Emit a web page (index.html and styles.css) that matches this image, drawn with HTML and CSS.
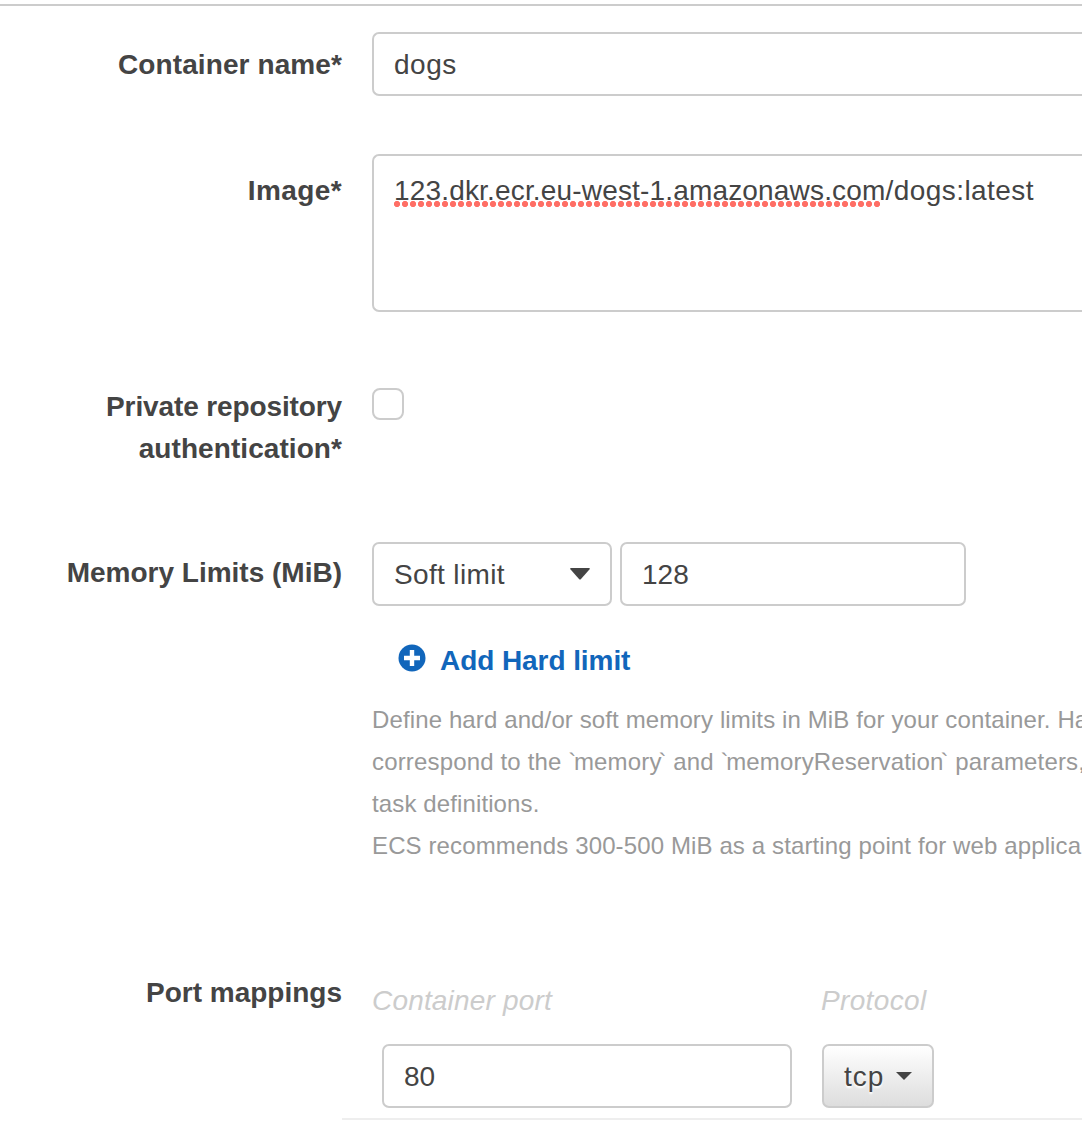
FILE: index.html
```html
<!DOCTYPE html>
<html lang="en">
<head>
<meta charset="utf-8">
<title>Container definition</title>
<link rel="stylesheet" href="styles.css">
</head>
<body>
<form class="container-form">
  <div class="row row-name">
    <div class="label label-name">Container name*</div>
    <div class="field"><div class="input input-wide">dogs</div></div>
  </div>
  <div class="row row-image">
    <div class="label label-image">Image*</div>
    <div class="field"><div class="textarea"><span class="misspelled">123.dkr.ecr.eu-west-1.amazonaws.com</span><span class="path">/dogs:latest</span></div></div>
  </div>
  <div class="row row-auth">
    <div class="label label-auth"><span class="auth-first">Private repository</span><br>authentication*</div>
    <div class="field"><div class="checkbox"></div></div>
  </div>
  <div class="row row-memory">
    <div class="label label-memory">Memory Limits (MiB)</div>
    <div class="field">
      <div class="limit">
        <div class="input select"><span class="soft">Soft limit</span><svg width="20" height="12" viewBox="0 0 20 12"><path d="M1 0H19Q20.6 0 19.4 1.4L11 11Q10 12 9 11L.6 1.4Q-.6 0 1 0Z" fill="#444"/></svg></div>
        <div class="input input-limit">128</div>
      </div>
      <a class="add"><svg width="28" height="28" viewBox="0 0 28 28"><circle cx="14" cy="14" r="13.5" fill="#1166bb"/><path d="M14 6v16M6 14h16" stroke="#fff" stroke-width="4.4"/></svg><span>Add Hard limit</span></a>
      <div class="hint">
        <div>Define hard and/or soft memory limits in MiB for your container. Ha</div>
        <div class="hint-params">correspond to the <span class="tick">`</span>memory<span class="tick tick-close">`</span> and <span class="tick">`</span>memoryReservation<span class="tick tick-close">`</span> parameters,</div>
        <div>task definitions.</div>
        <div>ECS recommends 300-500 MiB as a starting point for web applica</div>
      </div>
    </div>
  </div>
  <div class="row row-ports">
    <div class="label label-ports">Port mappings</div>
    <div class="ports">
      <div class="port-head"><span class="head-port">Container port</span><span class="head-protocol">Protocol</span></div>
      <div class="port-line">
        <div class="input input-port">80</div>
        <div class="input dropdown"><span>tcp</span><svg width="16" height="8" viewBox="0 0 16 8"><path d="M0 0H16L8 8Z" fill="#444"/></svg></div>
      </div>
    </div>
  </div>
</form>
</body>
</html>
```
FILE: styles.css
```css
* { box-sizing: border-box; }
body {
  margin: 0;
  height: 1136px;
  overflow: hidden;
  background: #fff;
  color: #444;
  font: 28px/42px "Liberation Sans", Arial, sans-serif;
}
svg { display: block; flex: none; }
.container-form {
  margin: 4px 0 0;
  border-top: 2px solid #ccc;
  padding-top: 26px;
}
.row { display: flex; white-space: nowrap; }
.row-name { height: 122px; }
.row-image { height: 234px; }
.row-auth { height: 154px; }
.row-memory { height: 429px; }
.label {
  width: 342px;
  flex: none;
  text-align: right;
  font-weight: bold;
}
.field { width: 740px; flex: none; padding-left: 30px; }
.label-name { padding-top: 12px; letter-spacing: .1px; }
.label-image { padding-top: 16px; letter-spacing: .4px; }
.label-auth { margin-top: -2px; letter-spacing: .07px; }
.auth-first { letter-spacing: -.12px; }
.label-memory { padding-top: 10px; }
.label-ports { padding-top: 1px; }
.input {
  height: 64px;
  border: 2px solid #ccc;
  border-radius: 7px;
  padding: 10px 20px 8px;
}
.input-wide, .textarea { width: 710px; border-right: 0; border-radius: 7px 0 0 7px; }
.input-wide { letter-spacing: .5px; }
.textarea {
  height: 158px;
  border: 2px solid #ccc;
  border-right: 0;
  padding: 14px 20px;
  letter-spacing: .17px;
}
.misspelled {
  padding-bottom: 1px;
  background:
    linear-gradient(#fff, #fff) 100% 100% / 5px 6px no-repeat,
    radial-gradient(circle at 3px 3px, #ff6f66 2.8px, transparent 3.3px) 0 100% / 8px 6px repeat-x;
}
.path { letter-spacing: .44px; }
.checkbox {
  width: 32px;
  height: 32px;
  border: 2px solid #ccc;
  border-radius: 8px;
}
.limit { display: flex; gap: 8px; }
.select {
  display: flex;
  width: 240px;
  align-items: center;
  justify-content: space-between;
}
.select svg { margin-top: -2px; }
.soft { letter-spacing: .35px; }
.input-limit { width: 346px; }
.add {
  display: flex;
  margin-top: 34px;
  padding-left: 26px;
  gap: 14px;
  color: #1166bb;
  font-weight: bold;
  letter-spacing: -.07px;
}
.add svg { margin-top: 4px; }
.hint { margin-top: 17px; color: #999; font-size: 24px; letter-spacing: .12px; }
.hint-params { letter-spacing: .16px; }
.tick { letter-spacing: -2.4px; }
.tick-close { margin-left: -3.2px; letter-spacing: 0; }
.ports { width: 740px; height: 149px; border-bottom: 2px solid #eee; }
.port-head {
  display: flex;
  padding: 9px 0 0 30px;
  color: #ccc;
  font-style: italic;
}
.head-port { width: 449px; letter-spacing: .18px; }
.head-protocol { letter-spacing: .35px; }
.port-line { display: flex; gap: 30px; padding: 22px 0 0 40px; }
.input-port { width: 410px; }
.dropdown {
  display: flex;
  width: 112px;
  align-items: center;
  justify-content: space-between;
  background: linear-gradient(#fff, #ddd);
  letter-spacing: 1px;
  text-shadow: 0 2px 2px #fff;
}
.dropdown svg { margin-top: -2px; }
```
